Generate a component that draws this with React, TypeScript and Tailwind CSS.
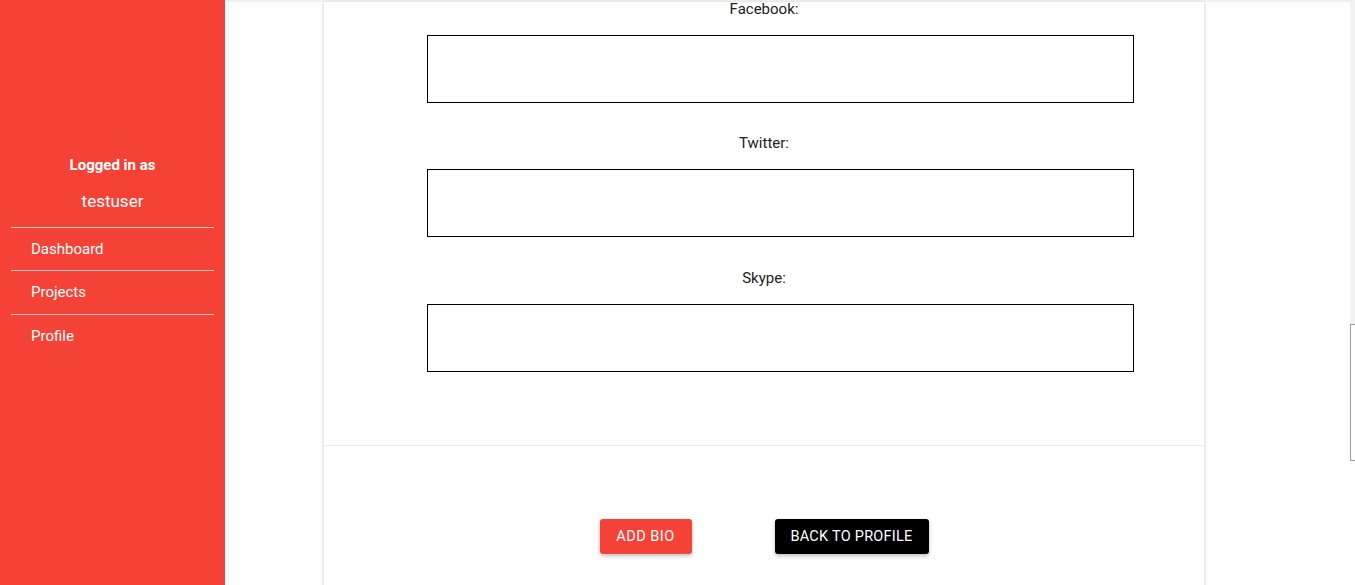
const fields = ["Facebook:", "Twitter:", "Skype:"];
const links = ["Dashboard", "Projects", "Profile"];

function Sidebar() {
  return (
    <aside className="flex h-[585px] w-[225px] shrink-0 flex-col bg-[#f44336] px-[11px] pt-[156px] text-white">
      <p className="h-[18px] text-center text-[15px] leading-[18px] font-bold">
        Logged in as
      </p>
      <p className="mt-[16px] h-[22px] text-center text-[17px] leading-[22px]">
        testuser
      </p>
      <div className="mt-[15px] border-t border-[#f8c9c5]" />
      {links.map((l, i) => (
        <div key={l}>
          <div className={`flex items-center pl-[20px] text-[15px] ${i === 1 ? "h-[43px]" : "h-[42px]"}`}>
            {l}
          </div>
          {i < links.length - 1 && <div className="border-t border-[#f8c9c5]" />}
        </div>
      ))}
    </aside>
  );
}

export default function App() {
  return (
    <div
      className="relative flex h-[585px] w-[1355px] overflow-hidden bg-white"
      style={{ fontFamily: "Roboto, 'Liberation Sans', sans-serif" }}
    >
      <Sidebar />
      <main className="relative flex-1 border-t-2 border-[#f1f1f1] bg-[#fefefe]">
        <div className="ml-[98px] h-[600px] w-[882px] border-x border-[#e6e6e6] bg-white shadow-[0_0_3px_rgba(0,0,0,0.12)]">
          <div className="flex flex-col items-center pb-[73px]">
            {fields.map((f, i) => (
              <div
                key={f}
                className={`flex flex-col items-center ${i === 0 ? "-mt-[2px]" : i === 1 ? "mt-[31px]" : "mt-[32px]"}`}
              >
                <label className="h-[18px] text-[15px] leading-[18px] text-[#212121]">{f}</label>
                <input
                  type="text"
                  className="mt-[17px] ml-[32px] h-[68px] w-[707px] border border-black bg-white outline-none"
                />
              </div>
            ))}
          </div>
          <div className="border-t border-[#ececec]" />
          <div className="mt-[73px] flex justify-center gap-[83px]">
            <button className="h-[35px] w-[92px] rounded-[3px] bg-[#f44336] text-[14.5px] tracking-[0.5px] text-white shadow-[0_2px_4px_rgba(0,0,0,0.25)]">
              ADD BIO
            </button>
            <button className="h-[35px] w-[154px] rounded-[3px] bg-black text-[14.5px] tracking-[0.25px] text-white shadow-[0_2px_4px_rgba(0,0,0,0.25)]">
              BACK TO PROFILE
            </button>
          </div>
        </div>
        <div className="absolute top-0 right-0 h-[322px] w-[5px] bg-[#f2f2f2]" />
        <div className="absolute top-[322px] right-0 flex h-[137px] w-[5px] items-center border-y border-l border-[#9a9a9a] bg-white pl-[1px]">
          <span className="mt-[52px] text-[9px] leading-none text-[#555]">⋮</span>
        </div>
      </main>
    </div>
  );
}
